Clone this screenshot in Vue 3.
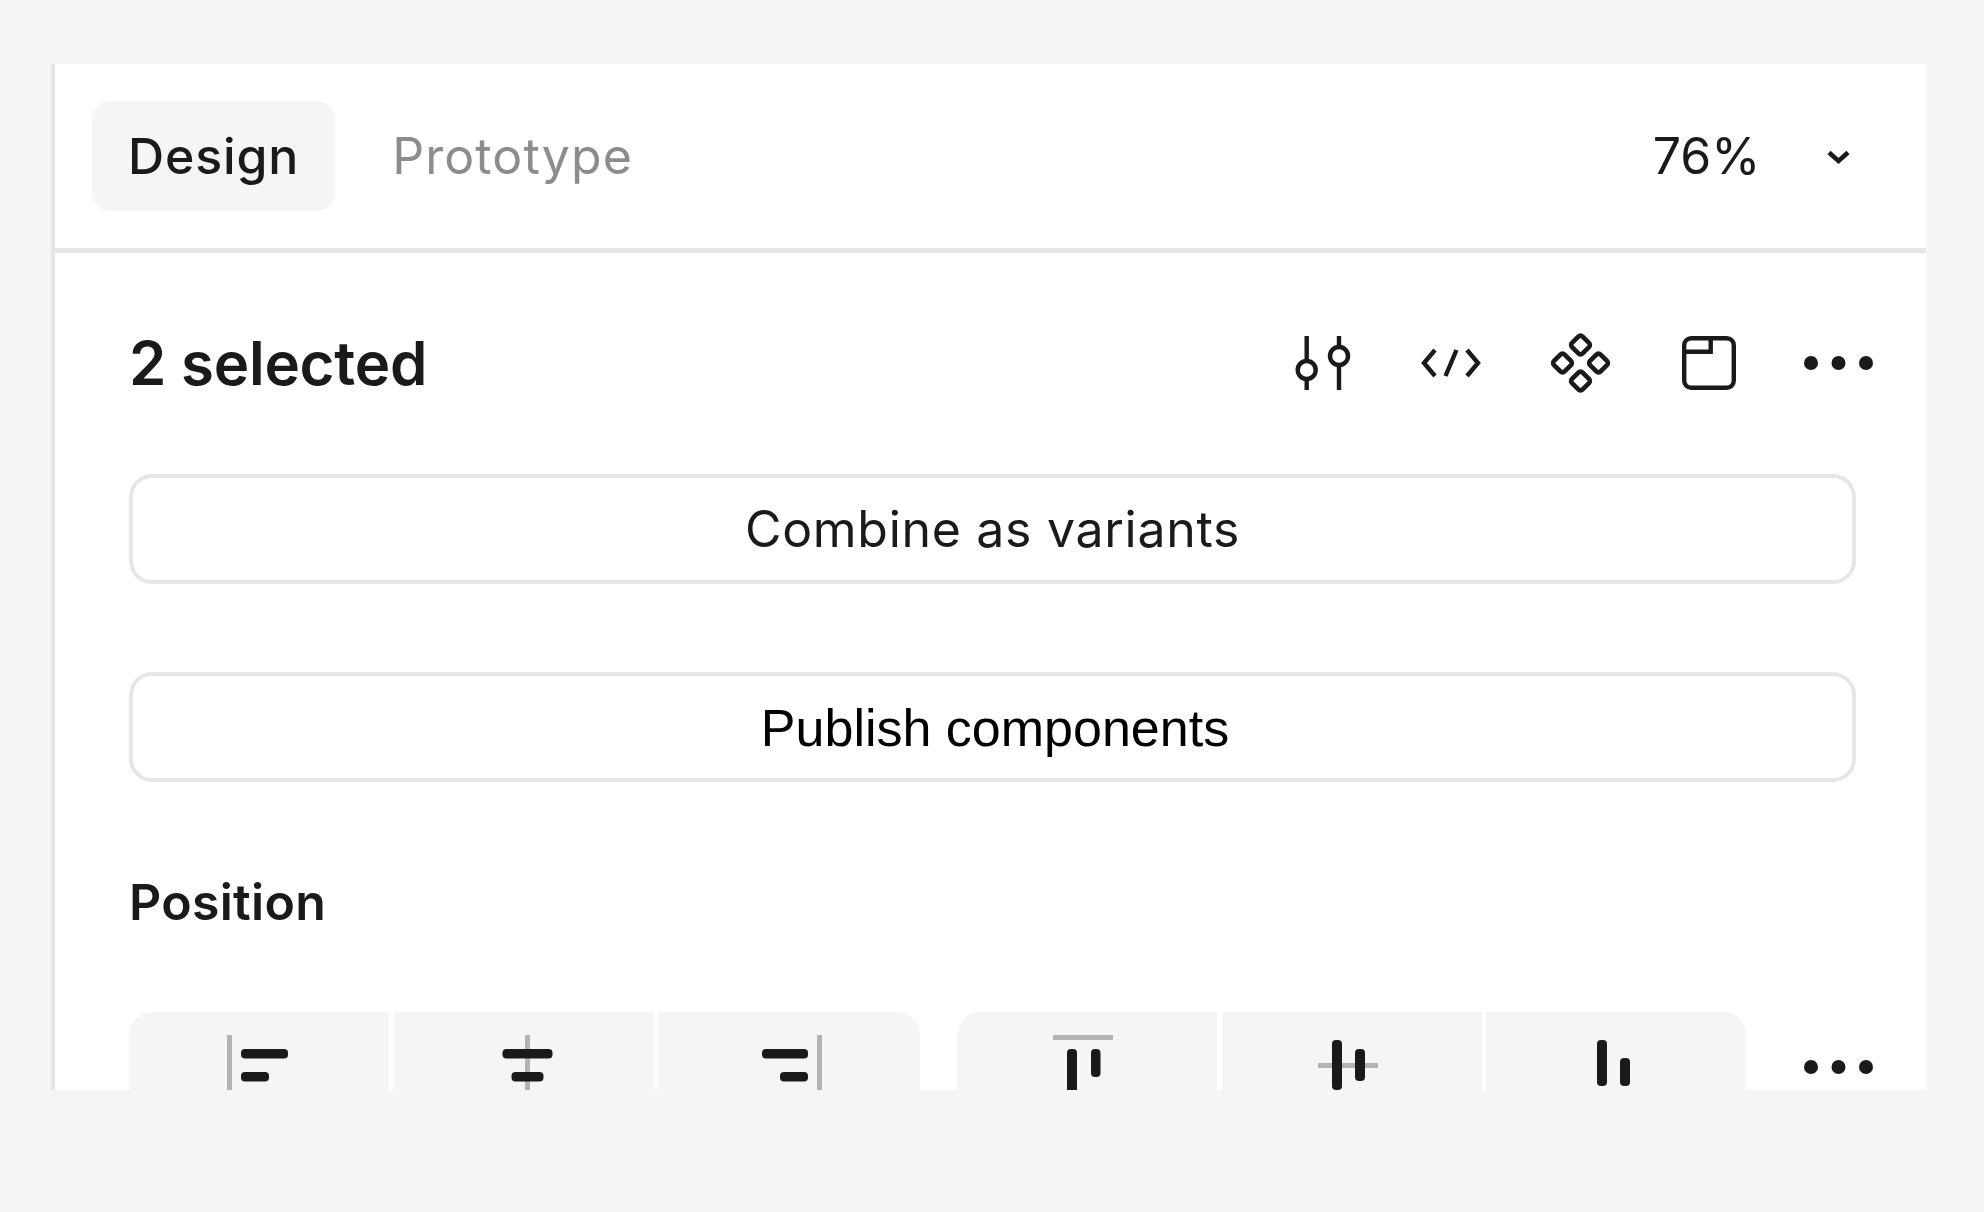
<template>
  <div class="page">
    <aside class="panel">
      <header class="tabs">
        <button class="tab active">Design</button>
        <button class="tab">Prototype</button>
        <span class="zoom">76%</span>
        <span class="icon-cell">
          <svg class="icon" viewBox="0 0 74 74" fill="none" stroke="#1a1a1a" stroke-width="4.6">
            <path d="M28 33.5 37.5 42 47 33.5" />
          </svg>
        </span>
      </header>

      <section class="content">
        <div class="title-row">
          <h2 class="title">2 selected</h2>
          <div class="actions">
            <span class="icon-cell">
              <svg class="icon" viewBox="0 0 74 74" fill="none" stroke="#1a1a1a" stroke-width="4.4">
                <path d="M20.7 10V35M20.7 53V64M53 10V21M53 39V64" />
                <circle cx="20.7" cy="44" r="9" />
                <circle cx="53" cy="30" r="9" />
              </svg>
            </span>
            <span class="icon-cell">
              <svg class="icon" viewBox="0 0 74 74" fill="none" stroke="#1a1a1a" stroke-width="4.4">
                <path d="M21 24 10 37 21 50M42.500 24 31.500 50M53 24 64 37 53 50" />
              </svg>
            </span>
            <span class="icon-cell">
              <svg class="icon" viewBox="0 0 74 74" fill="none" stroke="#1a1a1a" stroke-width="4.6">
                <rect
                  v-for="d in diamonds"
                  :key="d[0] + '-' + d[1]"
                  :x="d[0] - 7.5"
                  :y="d[1] - 7.5"
                  width="15"
                  height="15"
                  rx="3"
                  :transform="`rotate(45 ${d[0]} ${d[1]})`"
                />
              </svg>
            </span>
            <span class="icon-cell">
              <svg class="icon" viewBox="0 0 74 74" fill="none" stroke="#1a1a1a" stroke-width="4.4">
                <rect x="12.200" y="12.200" width="49.600" height="49.600" rx="7" />
                <path d="M12 25.700H38.700V12" />
              </svg>
            </span>
            <span class="icon-cell">
              <svg class="icon" viewBox="0 0 74 74" fill="#1a1a1a">
                <circle cx="10" cy="37" r="7" />
                <circle cx="37.500" cy="37" r="7" />
                <circle cx="65" cy="37" r="7" />
              </svg>
            </span>
          </div>
        </div>

        <button class="wide-btn combine">Combine as variants</button>
        <button class="wide-btn publish">Publish components</button>

        <h3 class="section-label">Position</h3>

        <div class="align-row">
          <div v-for="(group, g) in alignGroups" :key="g" class="align-group" :class="'group-' + g">
            <div v-for="(cell, c) in group" :key="c" class="align-cell">
              <svg class="icon" viewBox="0 0 74 74">
                <rect
                  v-for="(r, i) in cell"
                  :key="i"
                  :x="r[0]"
                  :y="r[1]"
                  :width="r[2]"
                  :height="r[3]"
                  :rx="i === 0 ? 0 : 4"
                  :fill="i === 0 ? '#b3b3b3' : '#1a1a1a'"
                />
              </svg>
            </div>
          </div>
          <span class="icon-cell more">
            <svg class="icon" viewBox="0 0 74 74" fill="#1a1a1a">
              <circle cx="10" cy="37" r="7" />
              <circle cx="37.500" cy="37" r="7" />
              <circle cx="65" cy="37" r="7" />
            </svg>
          </span>
        </div>
      </section>
    </aside>
  </div>
</template>

<script setup>
const diamonds = [
  [37.5, 19],
  [37.5, 55],
  [19.5, 37],
  [55.5, 37]
]

// each rect is x, y, w, h; the first one in a cell is the grey guide line
const alignGroups = [
  [
    [[5, 5, 5, 60], [19, 19, 47, 9.5], [19, 42, 28, 9.5]],
    [[38, 5, 5, 60], [15.5, 19, 50, 9.5], [24.5, 42, 32, 9.5]],
    [[65, 5, 5, 60], [10, 19, 46, 9.5], [28, 42, 28, 9.5]]
  ],
  [
    [[3, 5, 60, 5], [17, 19, 10, 50], [41, 19, 9.5, 28]],
    [[3, 33, 60, 5], [17, 10, 10, 50], [40, 19, 10, 32]],
    [[0, 0, 0, 0], [18, 10, 10, 46], [41, 28, 10, 28]]
  ]
]
</script>

<style scoped>
.page {
  padding: 64px 58px 0 51px;
  font-family: Inter, "Liberation Sans", sans-serif;
  color: #1a1a1a;
}

.panel {
  box-sizing: border-box;
  height: 1026px;
  background: #fff;
  border-left: 4px solid #e6e6e6;
  overflow: hidden;
}

.tabs {
  display: flex;
  align-items: center;
  padding: 37px 24px 37px 37px;
  border-bottom: 5px solid #e6e6e6;
}

.tab {
  height: 110px;
  padding: 0 36px;
  border: none;
  border-radius: 18px;
  background: transparent;
  color: #8c8c8c;
  font: 400 50px Inter, sans-serif;
  letter-spacing: 1.1px;
}

.tab.active {
  margin-right: 21px;
  background: #f5f5f5;
  color: #1a1a1a;
  font-weight: 500;
  letter-spacing: 0.85px;
}

.zoom {
  margin-left: auto;
  margin-right: 13px;
  font-size: 50px;
}

.icon-cell {
  display: flex;
  justify-content: center;
  width: 128.75px;
}

.icon {
  display: block;
  width: 74px;
  height: 74px;
  flex: none;
}

.content {
  padding: 73px 24px 0 74px;
}

.title-row {
  display: flex;
  align-items: center;
  justify-content: space-between;
  height: 74px;
  margin-bottom: 74px;
}

.title {
  margin: 0;
  font-size: 60px;
  font-weight: 600;
  letter-spacing: -0.25px;
}

.actions {
  display: flex;
}

.wide-btn {
  display: block;
  box-sizing: border-box;
  width: 1727px;
  height: 110px;
  border: 4.5px solid #e6e6e6;
  border-radius: 23px;
  background: #fff;
}

.combine {
  margin-bottom: 88px;
  color: #1a1a1a;
  font: 400 50px Inter, sans-serif;
  letter-spacing: 0.7px;
}

.publish {
  padding: 2px 0 0 5px;
  color: #000;
  font: 400 52px "Liberation Sans", Arial, sans-serif;
}

.section-label {
  display: flex;
  align-items: center;
  height: 74px;
  margin: 83px 0 73px;
  font-size: 50px;
  font-weight: 600;
  letter-spacing: 0.3px;
}

.align-row {
  display: flex;
}

.align-group {
  display: flex;
  gap: 4.5px;
  height: 110px;
  border-radius: 23px;
  overflow: hidden;
}

.group-0 {
  width: 791px;
  margin-right: 37px;
}

.group-1 {
  width: 789px;
  margin-right: 27.250px;
}

.align-cell {
  display: flex;
  justify-content: center;
  flex: 1;
  padding-top: 18px;
  background: #f5f5f5;
}

.group-0 .align-cell {
  flex: 0 0 260px;
}

.group-0 .align-cell:last-child {
  flex: 1;
}

.more {
  padding-top: 18px;
}
</style>

<style>
body {
  background: #f5f5f5;
}
</style>
